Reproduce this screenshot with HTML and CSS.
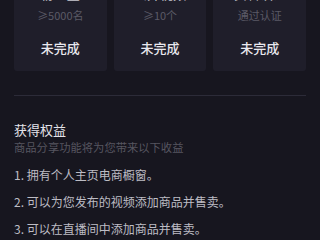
FILE: index.html
```html
<!DOCTYPE html>
<html lang="zh">
<head>
<meta charset="utf-8">
<link rel="stylesheet" href="styles.css">
</head>
<body>
<div class="page">
  <div class="cards">
    <div class="card">
      <div class="c-title">粉丝量</div>
      <div class="c-sub">≥5000名</div>
      <div class="c-status">未完成</div>
    </div>
    <div class="card">
      <div class="c-title">公开视频</div>
      <div class="c-sub">≥10个</div>
      <div class="c-status">未完成</div>
    </div>
    <div class="card">
      <div class="c-title">实名认证</div>
      <div class="c-sub">通过认证</div>
      <div class="c-status">未完成</div>
    </div>
  </div>
  <div class="divider"></div>
  <div class="title">获得权益</div>
  <div class="subtitle">商品分享功能将为您带来以下收益</div>
  <ul class="list">
    <li>1. 拥有个人主页电商橱窗。</li>
    <li>2. 可以为您发布的视频添加商品并售卖。</li>
    <li>3. 可以在直播间中添加商品并售卖。</li>
  </ul>
</div>
</body>
</html>
```

FILE: styles.css
```css
html, body {
  margin: 0;
  padding: 0;
  background: #17161f;
  overflow: hidden;
}
body {
  width: 320px;
  height: 240px;
  font-family: "Noto Sans CJK SC", "Noto Sans", sans-serif;
}
.page {
  padding: 0 14px;
}
.cards {
  display: flex;
  gap: 7px;
  margin-top: -29px;
}
.card {
  flex: 1;
  background: #1f1e2a;
  border-radius: 3px;
  padding: 14px 0 14px;
  text-align: center;
}
.c-title {
  font-size: 13px;
  line-height: 18px;
  color: #c9c8cf;
}
.c-sub {
  margin-top: 4px;
  font-size: 11px;
  line-height: 16px;
  color: #5b5a66;
}
.c-status {
  margin-top: 16px;
  font-size: 13px;
  line-height: 18px;
  font-weight: 500;
  color: #e9e8ee;
}
.divider {
  margin-top: 24px;
  height: 1px;
  background: #2c2b38;
}
.title {
  margin-top: 25px;
  font-size: 13px;
  line-height: 18px;
  color: #e4e3ea;
}
.subtitle {
  font-size: 11.3px;
  line-height: 16px;
  color: #56555f;
}
.list {
  list-style: none;
  margin: 11px 0 0;
  padding: 0;
  display: flex;
  flex-direction: column;
  gap: 9px;
}
.list li {
  font-size: 12px;
  line-height: 18px;
  color: #bdbcc4;
}
```
